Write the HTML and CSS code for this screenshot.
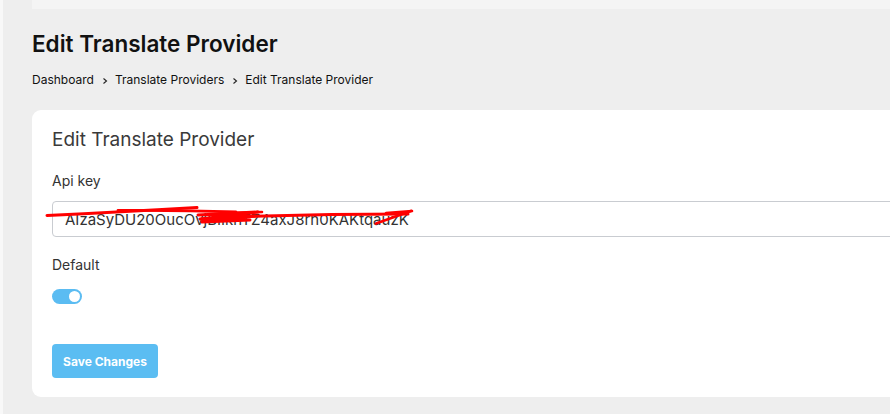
FILE: index.html
```html
<!DOCTYPE html>
<html lang="en">
<head>
<meta charset="utf-8">
<title>Edit Translate Provider</title>
<link rel="stylesheet" href="styles.css">
</head>
<body>
<div class="layout">
  <div class="side-strip"></div>
  <main class="main">
    <div class="prev-panel"></div>
    <h1 class="page-title">Edit Translate Provider</h1>
    <nav class="crumbs">
      <span>Dashboard</span>
      <svg class="chev" viewBox="0 0 8 8" width="8" height="8"><path d="M2.5 1.5 L5.5 4 L2.5 6.5" fill="none" stroke="#222" stroke-width="1.1"/></svg>
      <span>Translate Providers</span>
      <svg class="chev" viewBox="0 0 8 8" width="8" height="8"><path d="M2.5 1.5 L5.5 4 L2.5 6.5" fill="none" stroke="#222" stroke-width="1.1"/></svg>
      <span>Edit Translate Provider</span>
    </nav>
    <section class="card">
      <h2 class="card-title">Edit Translate Provider</h2>
      <label class="field-label">Api key</label>
      <div class="input-wrap">
        <input class="text-input" type="text" value="AIzaSyDU20OucOvjBIIkhTZ4axJ8rh0KAKtqauzK">
        <svg class="scribble" viewBox="42 201 400 36" width="400" height="36">
          <g fill="none" stroke="#ff0000" stroke-linecap="round" stroke-linejoin="round">
            <path d="M47 215.5 Q120 212 197 207.5" stroke-width="3"/>
            <path d="M118 210.5 Q180 210 236 212" stroke-width="2.8"/>
            <path d="M198 215 L258 212 L200 219 L255 216 L202 222 L250 220" stroke-width="3"/>
            <path d="M230 217 Q320 214 408 214" stroke-width="3"/>
            <path d="M232 213 L262 212" stroke-width="2.6"/>
            <path d="M376 223.5 L411 211" stroke-width="2.8"/>
            <path d="M386 213 L412 211" stroke-width="2.6"/>
          </g>
        </svg>
      </div>
      <label class="field-label field-label--second">Default</label>
      <div class="toggle"><span class="knob"></span></div>
      <button class="save-btn" type="button">Save Changes</button>
    </section>
  </main>
</div>
</body>
</html>
```
FILE: styles.css
```css
html, body {
  margin: 0;
  padding: 0;
}
body {
  background: #eeeeee;
  font-family: Inter, "Noto Sans", "Liberation Sans", sans-serif;
  color: #111;
  overflow: hidden;
  width: 890px;
  height: 414px;
}
.layout {
  display: flex;
  height: 414px;
}
.side-strip {
  width: 3px;
  flex: none;
  background: #f8f8f8;
}
.main {
  flex: none;
  width: 900px;
  padding-left: 29px;
  display: flex;
  flex-direction: column;
}
.prev-panel {
  height: 9px;
  background: #f4f4f4;
}
.page-title {
  margin: 21px 0 0;
  font-size: 22.5px;
  line-height: 28px;
  font-weight: 600;
  color: #111;
}
.crumbs {
  margin-top: 14px;
  display: flex;
  align-items: center;
  gap: 6px;
  font-size: 12px;
  line-height: 16px;
  color: #111;
}
.chev {
  margin: 1px 0 0 1px;
}
.card {
  margin-top: 22px;
  background: #fff;
  border-radius: 9px;
  padding: 18px 0 19px 20px;
  display: flex;
  flex-direction: column;
  align-items: flex-start;
}
.card-title {
  margin: 0;
  font-size: 19px;
  line-height: 24px;
  font-weight: 400;
  color: #3a3a3a;
}
.field-label {
  margin-top: 19px;
  font-size: 14px;
  line-height: 20px;
  color: #333;
}
.field-label--second {
  margin-top: 18px;
}
.input-wrap {
  position: relative;
  margin-top: 10px;
  align-self: stretch;
}
.text-input {
  box-sizing: border-box;
  width: 100%;
  height: 36px;
  border: 1px solid #c9ccd1;
  border-radius: 4px;
  padding: 0 12px;
  font-family: inherit;
  font-size: 15px;
  color: #333;
  background: #fff;
  outline: none;
}
.scribble {
  position: absolute;
  left: -10px;
  top: 0;
  overflow: visible;
  pointer-events: none;
}
.toggle {
  margin-top: 14px;
  width: 30px;
  height: 15px;
  border-radius: 8px;
  background: #5bbcf2;
  display: flex;
  align-items: center;
  justify-content: flex-end;
  padding-right: 2px;
  box-sizing: border-box;
}
.knob {
  width: 11px;
  height: 11px;
  border-radius: 50%;
  background: #fff;
}
.save-btn {
  margin-top: 40px;
  width: 106px;
  height: 34px;
  border: none;
  border-radius: 4px;
  background: #5bbdf2;
  color: #fff;
  font-family: inherit;
  font-size: 12px;
  font-weight: 700;
  padding: 0;
}
```
